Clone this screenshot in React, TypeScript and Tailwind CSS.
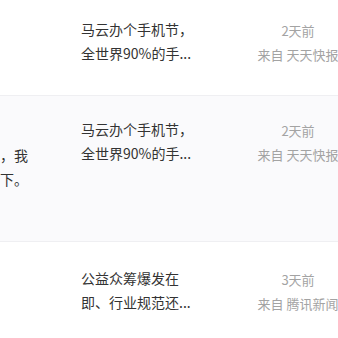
import React from "react";

type Row = {
  left: string[];
  title: string[];
  time: string;
  source: string;
  bg: string;
  pt: string;
  h: string;
};

export default function App() {
  const font = { fontFamily: '"Noto Sans CJK SC", "Noto Sans", sans-serif' };
  return (
    <div className="w-[338px] h-[338px] overflow-hidden bg-white" style={font}>
      <div className="w-[420px]">
        {/* Row 1 */}
        <div className="flex h-[96px] border-b border-[#efeff2] bg-white">
          <div className="w-[65px] shrink-0" />
          <div className="w-[150px] shrink-0 pl-[16px] pt-[17px] text-[14px] leading-[24px] text-[#333333] whitespace-nowrap">
            <div>马云办个手机节，</div>
            <div>全世界90%的手...</div>
          </div>
          <div className="w-[166px] shrink-0 pt-[19px] text-center text-[13px] leading-[24px] text-[#a3a3a3] whitespace-nowrap">
            <div>2天前</div>
            <div>来自 天天快报</div>
          </div>
        </div>
        {/* Row 2 */}
        <div className="flex h-[146px] border-b border-[#efeff2] bg-[#fafafc]">
          <div className="w-[65px] shrink-0 pt-[23px] text-[14px] leading-[24px] text-[#333333] whitespace-nowrap">
            <div>&nbsp;</div>
            <div>，我</div>
            <div>下。</div>
          </div>
          <div className="w-[150px] shrink-0 pl-[16px] pt-[21px] text-[14px] leading-[24px] text-[#333333] whitespace-nowrap">
            <div>马云办个手机节，</div>
            <div>全世界90%的手...</div>
          </div>
          <div className="w-[166px] shrink-0 pt-[23px] text-center text-[13px] leading-[24px] text-[#a3a3a3] whitespace-nowrap">
            <div>2天前</div>
            <div>来自 天天快报</div>
          </div>
        </div>
        {/* Row 3 */}
        <div className="flex h-[120px] bg-white">
          <div className="w-[65px] shrink-0" />
          <div className="w-[150px] shrink-0 pl-[16px] pt-[24px] text-[14px] leading-[24px] text-[#333333] whitespace-nowrap">
            <div>公益众筹爆发在</div>
            <div>即、行业规范还...</div>
          </div>
          <div className="w-[166px] shrink-0 pt-[26px] text-center text-[13px] leading-[24px] text-[#a3a3a3] whitespace-nowrap">
            <div>3天前</div>
            <div>来自 腾讯新闻</div>
          </div>
        </div>
      </div>
    </div>
  );
}
